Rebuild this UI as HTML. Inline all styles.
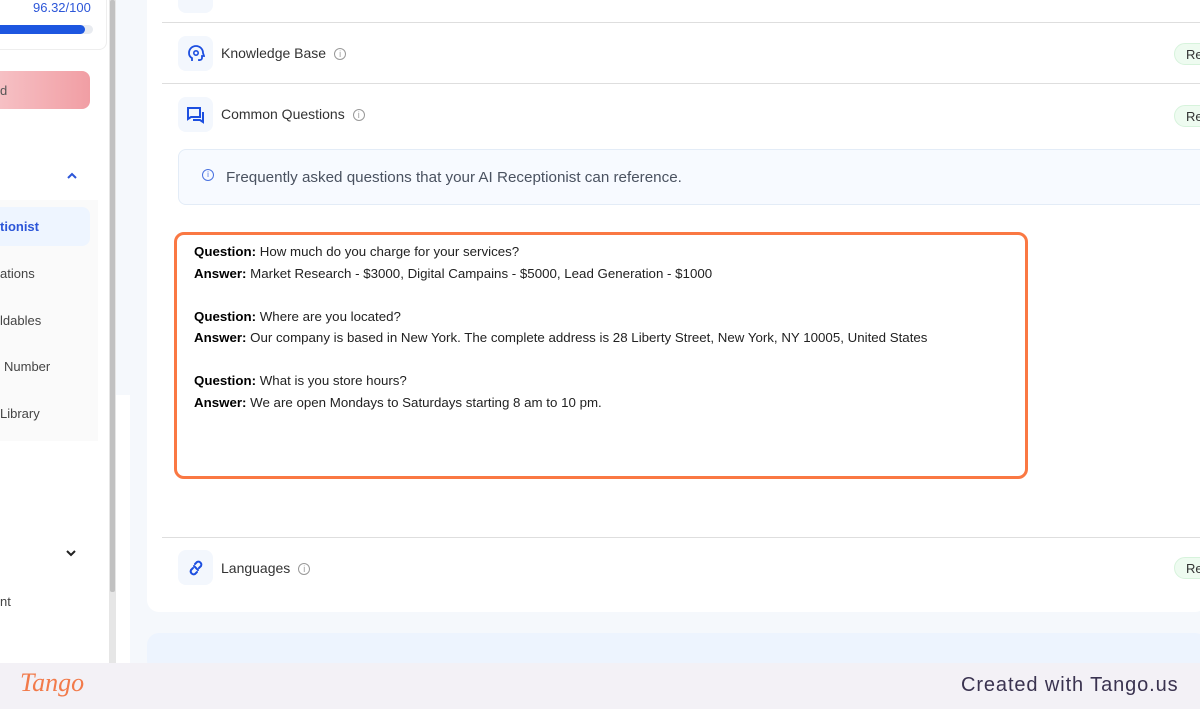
<!DOCTYPE html>
<html><head><meta charset="utf-8"><style>
*{margin:0;padding:0;box-sizing:border-box}
body{width:1200px;height:709px;overflow:hidden;background:#f5f8fc;font-family:"Liberation Sans",sans-serif;position:relative}
.abs{position:absolute}
.side{left:0;top:0;width:110px;height:663px;background:#fff}
.sb{left:109px;top:0;width:7px;height:663px;background:#e6e6e6}
.thumb{left:110px;top:0;width:5px;height:592px;background:#c1c1c1;border-radius:2px}
.card{left:147px;top:0;width:1060px;height:612px;background:#fff;border-radius:0 0 12px 12px}
.sep{left:162px;width:1038px;height:1px;background:#dedede}
.ib{left:178px;width:35px;height:35px;background:#f3f7fd;border-radius:8px;display:flex;align-items:center;justify-content:center}
.lbl{left:221px;font-size:14px;color:#333}
.info{display:inline-block;width:12px;height:12px;border:1px solid #999;border-radius:50%;font-size:9px;line-height:10px;text-align:center;color:#999;margin-left:8px;vertical-align:1px}
.pill{left:1174px;width:60px;height:22px;background:#eefbf0;border:1px solid #d7f3dc;border-radius:11px;font-size:13px;color:#333;padding:3px 0 0 11px}
.qa{left:174px;top:232px;width:854px;height:247px;border:3px solid #fa7843;border-radius:10px;background:#fff;padding:6px 0 0 17px;font-size:13.3px;color:#222;line-height:21.5px}
.qa b{color:#000}
.nav{font-size:13px;color:#444}
</style></head><body>
<div class="abs side"></div>
<div class="abs" style="left:0;top:0;width:107px;height:50px;border:1px solid #eee;border-left:none;border-top:none;border-radius:0 0 8px 0;background:#fff"></div>
<div class="abs" style="left:33px;top:0;font-size:13px;color:#2c56d8">96.32/100</div>
<div class="abs" style="left:0;top:25px;width:93px;height:9px;background:#e8ebf0;border-radius:5px"></div>
<div class="abs" style="left:0;top:25px;width:85px;height:9px;background:#1d56e0;border-radius:0 5px 5px 0"></div>
<div class="abs" style="left:0;top:71px;width:90px;height:38px;background:linear-gradient(90deg,#f6c0c4,#f19ea4);border-radius:0 8px 8px 0"></div>
<div class="abs nav" style="left:0;top:83px;color:#555">d</div>
<svg class="abs" style="left:66px;top:172px" width="12" height="8"><path d="M2 6l4-4 4 4" stroke="#2c56d8" stroke-width="2" fill="none"/></svg>
<div class="abs" style="left:0;top:200px;width:98px;height:241px;background:#fafafa"></div>
<div class="abs" style="left:0;top:207px;width:90px;height:39px;background:#eef5ff;border-radius:0 8px 8px 0"></div>
<div class="abs nav" style="left:0;top:219px;color:#2c56d8;font-weight:bold">tionist</div>
<div class="abs nav" style="left:0;top:266px">ations</div>
<div class="abs nav" style="left:0;top:313px">ldables</div>
<div class="abs nav" style="left:4px;top:359px">Number</div>
<div class="abs nav" style="left:0;top:406px">Library</div>
<div class="abs" style="left:115px;top:395px;width:15px;height:268px;background:#fff"></div>
<svg class="abs" style="left:65px;top:548px" width="12" height="10"><path d="M2 3l4 4 4-4" stroke="#222" stroke-width="2" fill="none"/></svg>
<div class="abs nav" style="left:0;top:594px">nt</div>
<div class="abs sb"></div><div class="abs thumb"></div>

<div class="abs card"></div>
<div class="abs ib" style="top:-22px"></div>
<div class="abs sep" style="top:22px"></div>
<div class="abs ib" style="top:36px"><svg width="18" height="18" viewBox="0 0 18 18"><path d="M5 16v-3c-2-1-3-3-3-5a7 7 0 0114 0l1 3h-2v2a2 2 0 01-2 2h-1v1" stroke="#1d4fe0" stroke-width="1.8" fill="none"/><circle cx="9" cy="8" r="2.2" stroke="#1d4fe0" stroke-width="1.6" fill="none"/></svg></div>
<div class="abs lbl" style="top:45px">Knowledge Base<span class="info">i</span></div>
<div class="abs pill" style="top:43px">Re</div>
<div class="abs sep" style="top:83px"></div>
<div class="abs ib" style="top:97px"><svg width="20" height="18" viewBox="0 0 20 18"><path d="M2 2h12v9H5l-3 2z" stroke="#1d4fe0" stroke-width="2" fill="none"/><path d="M17 6v10l-3-2H7" stroke="#1d4fe0" stroke-width="2" fill="none"/></svg></div>
<div class="abs lbl" style="top:106px">Common Questions<span class="info">i</span></div>
<div class="abs pill" style="top:105px">Re</div>
<div class="abs" style="left:178px;top:149px;width:1030px;height:56px;background:#f7faff;border:1px solid #e3ecf7;border-radius:8px"></div>
<div class="abs" style="left:202px;top:169px;width:12px;height:12px;border:1.3px solid #4a72e0;border-radius:50%;font-size:8px;line-height:10px;text-align:center;color:#4a72e0">i</div>
<div class="abs" style="left:226px;top:169px;font-size:15.2px;color:#4a5260">Frequently asked questions that your AI Receptionist can reference.</div>
<div class="abs qa">
<div><b>Question:</b> How much do you charge for your services?</div>
<div><b>Answer:</b> Market Research - $3000, Digital Campains - $5000, Lead Generation - $1000</div>
<div>&nbsp;</div>
<div><b>Question:</b> Where are you located?</div>
<div><b>Answer:</b> Our company is based in New York. The complete address is 28 Liberty Street, New York, NY 10005, United States</div>
<div>&nbsp;</div>
<div><b>Question:</b> What is you store hours?</div>
<div><b>Answer:</b> We are open Mondays to Saturdays starting 8 am to 10 pm.</div>
</div>
<div class="abs sep" style="top:537px"></div>
<div class="abs ib" style="top:550px"><svg width="18" height="18" viewBox="0 0 18 18"><path d="M8 5l2-2a3 3 0 014 4l-2 2M10 13l-2 2a3 3 0 01-4-4l2-2M7 7l4 4" stroke="#1d4fe0" stroke-width="2" fill="none" stroke-linecap="round"/></svg></div>
<div class="abs lbl" style="top:560px">Languages<span class="info">i</span></div>
<div class="abs pill" style="top:557px">Re</div>
<div class="abs" style="left:147px;top:633px;width:1060px;height:40px;background:#edf4fe;border-radius:12px"></div>
<div class="abs" style="left:0;top:663px;width:1200px;height:46px;background:#f3f1f6"></div>
<div class="abs" style="left:20px;top:668px;font-family:'Liberation Serif',serif;font-style:italic;font-size:26px;color:#f27a4a">Tango</div>
<div class="abs" style="left:961px;top:674px;font-size:20px;letter-spacing:0.9px;color:#3a3350">Created with Tango.us</div>
</body></html>
